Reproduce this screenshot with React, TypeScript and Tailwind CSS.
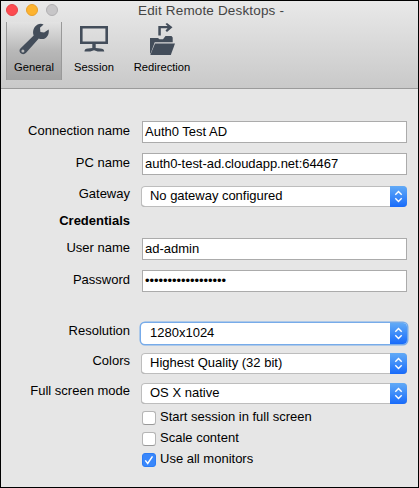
import type { ReactNode } from 'react';

function Wrench() {
  return (
    <svg width="32" height="32" viewBox="0 0 32 32" fill="#434d5a">
      <path
        fillRule="evenodd"
        d="M25.6 1.4 22 4.8l.4 4.2 3.7.5 4.6-3.1c.9 5.6-2.6 10.1-7.3 9.7-1 0-1.8-.2-2.6-.6L8.1 29.8c-1.3 1.4-3 1.7-4.5 1-2.3-.9-2.8-3.6-1.2-5.2L15.7 12.6c-1.6-4.3.1-8.9 3.9-11 1.9-1.1 4-1.1 6-.2ZM4.9 26.5a1.5 1.5 0 1 0 0 3 1.5 1.5 0 0 0 0-3Z"
      />
    </svg>
  );
}

function Monitor() {
  return (
    <svg width="32" height="32" viewBox="0 0 32 32" fill="#434d5a">
      <path fillRule="evenodd" d="M2 3h28v18H2Zm2.6 2.6v12.8h22.8V5.600Z" />
      <path d="M14.3 21h3.4v3.900l4.5.5c2.8.3 4 .9 4 3.1h-6.500L16 27.200 12.300 28.500H6.500c0-2.200 1-2.800 3.500-3.100l4.300-.5Z" />
    </svg>
  );
}

function Folder() {
  return (
    <svg width="32" height="34" viewBox="0 0 32 34" fill="#434d5a">
      <path d="M12.3 12.5V3h9.300L19.500 1 21 0l5.500 4.200L21 9l-1.500-1.500 2.100-2.200h-6.800v7.200Z" />
      <path d="M4 15h8l1.500 1.200h3.500L19.500 13h6l1.200 1.500v4.700H8.700L5 29.500 4 31Z" />
      <path d="M9 20.500h20L24.800 32H4.300Z" />
    </svg>
  );
}

function Tab({ label, icon, className }: { label: string; icon: ReactNode; className: string }) {
  return (
    <div className={`flex h-[58px] flex-col items-center text-[11.2px] text-black ${className}`}>
      <div className="h-[37px] pt-px">{icon}</div>
      <span className="leading-4 whitespace-nowrap">{label}</span>
    </div>
  );
}

function Row({ label, className, labelClass = '', children }: { label: string; className: string; labelClass?: string; children?: ReactNode }) {
  return (
    <div className={`flex ${className}`}>
      <div className={`w-[129px] shrink-0 text-right leading-5 whitespace-nowrap ${labelClass}`}>{label}</div>
      {children}
    </div>
  );
}

function Input({ value, className = '' }: { value: string; className?: string }) {
  return (
    <div className="ml-3 flex h-[22px] w-[265px] border border-[#ababab] bg-white pl-[2px] leading-5 whitespace-nowrap">
      <span className={className}>{value}</span>
    </div>
  );
}

function Select({ value, focused = false, className = '' }: { value: string; focused?: boolean; className?: string }) {
  return (
    <div
      className={`ml-[11px] flex h-[21px] w-[266px] rounded-[4px] bg-white leading-5 whitespace-nowrap ${
        focused ? 'shadow-[0_0_0_1.5px_#77abe9]' : 'shadow-[inset_0_0_0_1px_#bdbdbd,inset_0_-1px_0_#999]'
      }`}
    >
      <span className={`flex-1 pl-[9px] ${className}`}>{value}</span>
      <div className="flex w-[17px] items-center justify-center rounded-r-[4px] bg-linear-to-b from-[#62aaf6] to-[#176afa]">
        <svg width="9" height="13" viewBox="0 0 9 13" fill="none" stroke="white" strokeWidth="1.4">
          <path d="m1.3 4.8 3.2-3.2 3.2 3.2M1.3 8.2l3.2 3.2 3.2-3.2" />
        </svg>
      </div>
    </div>
  );
}

function Check({ label, checked = false }: { label: string; checked?: boolean }) {
  return (
    <div className="flex h-[21px]">
      <div
        className={`flex size-[14px] items-center justify-center rounded-[3px] border ${
          checked ? 'border-[#2b7cf5] bg-[#3987fb]' : 'border-[#b5b5b5] border-b-[#999] bg-white'
        }`}
      >
        {checked && (
          <svg width="10" height="10" viewBox="0 0 10 10" fill="none" stroke="white" strokeWidth="1.5">
            <path d="m1.3 5.4 2.4 3 4.800-7" />
          </svg>
        )}
      </div>
      <span className="-mt-1 ml-1 leading-5 whitespace-nowrap">{label}</span>
    </div>
  );
}

export default function App() {
  return (
    <div className="h-[488px] w-[419px] overflow-hidden border border-black bg-[#e6e6e6] font-['Liberation_Sans',Arial,sans-serif] text-[13px] text-black">
      <header className="h-[88px] border-b border-[#9b9b9b] bg-linear-to-b from-[#e9e9e9] to-[#c9c9c9]">
        <div className="flex h-[21px] pt-[3px] pl-[5px]">
          <div className="flex gap-2">
            <i className="size-3 rounded-full border border-[#e74347] bg-[#fc4b50]" />
            <i className="size-3 rounded-full border border-[#e8a02b] bg-[#fdb32f]" />
            <i className="size-3 rounded-full border border-[#b1b0b2] bg-[#c7c6c8]" />
          </div>
          <span className="-mt-[3px] ml-[80px] text-[13.5px] leading-5 tracking-[0.16px] whitespace-nowrap text-[#444]">Edit Remote Desktops -</span>
        </div>
        <div className="flex pl-[5px]">
          <Tab
            label="General"
            icon={<Wrench />}
            className="w-[56px] border-x border-x-[#999] bg-linear-to-b from-[#e3e3e3] via-[#b8b8b8] to-[#a3a3a3]"
          />
          <Tab label="Session" icon={<Monitor />} className="w-[64px]" />
          <Tab label="Redirection" icon={<Folder />} className="w-[72px]" />
        </div>
      </header>
      <main className="pt-[32px]">
        <Row label="Connection name" className="h-8">
          <Input value="Auth0 Test AD" />
        </Row>
        <Row label="PC name" className="h-[33px]">
          <Input value="auth0-test-ad.cloudapp.net:64467" className="tracking-[-0.04px]" />
        </Row>
        <Row label="Gateway" className="h-[25px]" labelClass="-mt-[2px]">
          <Select value="No gateway configured" className="tracking-[-0.03px]" />
        </Row>
        <Row label="Credentials" className="h-[27px]" labelClass="font-bold" />
        <Row label="User name" className="h-8">
          <Input value="ad-admin" />
        </Row>
        <Row label="Password" className="h-[53px]">
          <Input value="••••••••••••••••••" className="tracking-[-0.05px]" />
        </Row>
        <Row label="Resolution" className="h-[30px]" labelClass="-mt-[2px]">
          <Select value="1280x1024" focused />
        </Row>
        <Row label="Colors" className="h-[30px]" labelClass="-mt-[2px]">
          <Select value="Highest Quality (32 bit)" />
        </Row>
        <Row label="Full screen mode" className="h-[28px]" labelClass="-mt-[2px]">
          <Select value="OS X native" />
        </Row>
        <div className="pl-[141px]">
          <Check label="Start session in full screen" />
          <Check label="Scale content" />
          <Check label="Use all monitors" checked />
        </div>
      </main>
    </div>
  );
}
